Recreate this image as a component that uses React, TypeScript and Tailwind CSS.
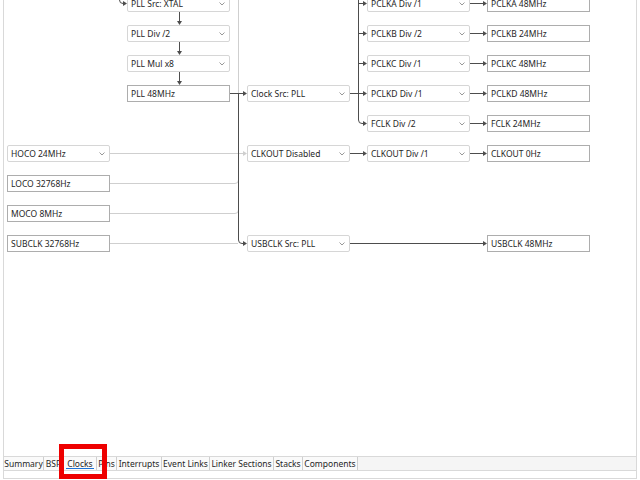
import React from 'react';

type Node = { col: number; row: number; label: string; dd?: boolean };

// column left edges and row tops, in page pixels
const COLS = [7, 127, 247, 367, 487];
const rowTop = (r: number) => -5 + 30 * r;

const NODES: Node[] = [
  { col: 1, row: 0, label: 'PLL Src: XTAL', dd: true },
  { col: 1, row: 1, label: 'PLL Div /2', dd: true },
  { col: 1, row: 2, label: 'PLL Mul x8', dd: true },
  { col: 1, row: 3, label: 'PLL 48MHz' },
  { col: 2, row: 3, label: 'Clock Src: PLL', dd: true },
  { col: 3, row: 0, label: 'PCLKA Div /1', dd: true },
  { col: 4, row: 0, label: 'PCLKA 48MHz' },
  { col: 3, row: 1, label: 'PCLKB Div /2', dd: true },
  { col: 4, row: 1, label: 'PCLKB 24MHz' },
  { col: 3, row: 2, label: 'PCLKC Div /1', dd: true },
  { col: 4, row: 2, label: 'PCLKC 48MHz' },
  { col: 3, row: 3, label: 'PCLKD Div /1', dd: true },
  { col: 4, row: 3, label: 'PCLKD 48MHz' },
  { col: 3, row: 4, label: 'FCLK Div /2', dd: true },
  { col: 4, row: 4, label: 'FCLK 24MHz' },
  { col: 0, row: 5, label: 'HOCO 24MHz', dd: true },
  { col: 2, row: 5, label: 'CLKOUT Disabled', dd: true },
  { col: 3, row: 5, label: 'CLKOUT Div /1', dd: true },
  { col: 4, row: 5, label: 'CLKOUT 0Hz' },
  { col: 0, row: 6, label: 'LOCO 32768Hz' },
  { col: 0, row: 7, label: 'MOCO 8MHz' },
  { col: 0, row: 8, label: 'SUBCLK 32768Hz' },
  { col: 2, row: 8, label: 'USBCLK Src: PLL', dd: true },
  { col: 4, row: 8, label: 'USBCLK 48MHz' },
];

const TABS = [
  { label: 'Summary', w: 40 },
  { label: 'BSP', w: 20 },
  { label: 'Clocks', w: 33, active: true },
  { label: 'Pins', w: 20 },
  { label: 'Interrupts', w: 45 },
  { label: 'Event Links', w: 48 },
  { label: 'Linker Sections', w: 64 },
  { label: 'Stacks', w: 29 },
  { label: 'Components', w: 55 },
];

const DARK = '#4d4d4d';
const LIGHT = '#cfcfcf';

const cy = (r: number) => 3.5 + 30 * r;

function Arrow({ x, y, color = DARK }: { x: number; y: number; color?: string }) {
  // right-pointing head, tip at x
  return <polygon points={`${x - 4},${y - 2.5} ${x},${y} ${x - 4},${y + 2.5}`} fill={color} />;
}

function ArrowDown({ x, y }: { x: number; y: number }) {
  return <polygon points={`${x - 2.5},${y - 4} ${x},${y} ${x + 2.5},${y - 4}`} fill={DARK} />;
}

function Wires() {
  return (
    <svg className="absolute left-0 top-0" width={640} height={456} viewBox="0 0 640 456">
      <g fill="none" stroke={LIGHT} strokeWidth={1}>
        <path d="M238.5,0 V93" />
        <path d="M110,153.5 H243" />
        <path d="M110,183.5 H235 Q238.5,183.5 238.5,180" />
        <path d="M110,213.5 H235 Q238.5,213.5 238.5,210" />
        <path d="M110,243.5 H238" />
      </g>
      <Arrow x={247} y={153.5} color={LIGHT} />

      <g fill="none" stroke={DARK} strokeWidth={1}>
        {/* XTAL into PLL source */}
        <path d="M119.5,-6 V0 Q119.5,3.5 123,3.5 H124" />
        {/* PLL chain */}
        <path d="M179.5,12 V22" />
        <path d="M179.5,42 V52" />
        <path d="M179.5,72 V82" />
        <path d="M230,93.5 H244" />
        {/* PLL to USB source */}
        <path d="M238.5,93.5 V240 Q238.5,243.5 242,243.5 H244" />
        {/* system clock bus */}
        <path d="M350,93.5 H358.5" />
        <path d="M358.5,-10 V120 Q358.5,123.5 362,123.5 H364" />
        {[0, 1, 2, 3].map((r) => (
          <path key={r} d={`M358.5,${cy(r)} H364`} />
        ))}
        {[0, 1, 2, 3, 4, 5].map((r) => (
          <path key={`o${r}`} d={`M470,${cy(r)} H484`} />
        ))}
        <path d="M350,153.5 H364" />
        <path d="M350,243.5 H484" />
      </g>

      <Arrow x={127} y={3.5} />
      <ArrowDown x={179.5} y={25} />
      <ArrowDown x={179.5} y={55} />
      <ArrowDown x={179.5} y={85} />
      <Arrow x={247} y={93.5} />
      <Arrow x={247} y={243.5} />
      {[0, 1, 2, 3, 4, 5].map((r) => (
        <Arrow key={`a${r}`} x={367} y={cy(r)} />
      ))}
      {[0, 1, 2, 3, 4, 5].map((r) => (
        <Arrow key={`b${r}`} x={487} y={cy(r)} />
      ))}
      <Arrow x={487} y={243.5} />
    </svg>
  );
}

function Box({ node }: { node: Node }) {
  return (
    <div
      className={`absolute flex h-[17px] w-[103px] items-center bg-white pl-[3px] text-[8.5px] leading-[12px] text-[#262626] ${
        node.dd ? 'rounded-[2px] border border-[#d6d6d6]' : 'border border-[#adadad]'
      }`}
      style={{ left: COLS[node.col], top: rowTop(node.row) }}
    >
      <span className="flex-1 whitespace-nowrap">{node.label}</span>
      {node.dd && (
        <svg width="6" height="4" viewBox="0 0 6 4" className="mr-[4px]">
          <path d="M0.5,0.5 L3,3 L5.5,0.5" fill="none" stroke="#8c8c8c" strokeWidth="0.9" />
        </svg>
      )}
    </div>
  );
}

export default function App() {
  return (
    <div className="relative h-[480px] w-[640px] overflow-hidden bg-white font-['Noto_Sans',sans-serif]">
      <div className="ml-[3px] flex w-[634px] flex-col">
        {/* diagram canvas */}
        <div className="relative h-[457px] overflow-hidden border-x border-b border-[#d9d9d9] bg-white">
          <div className="absolute left-[-4px] top-0 h-[456px] w-[640px]">
            <Wires />
            {NODES.map((n) => (
              <Box key={n.label} node={n} />
            ))}
          </div>
        </div>

        {/* editor tabs */}
        <div className="flex h-[14px] border-x border-b border-[#d9d9d9] bg-[#f5f5f5] text-[8.5px] leading-[12px] text-[#262626]">
          {TABS.map((t) => (
            <div
              key={t.label}
              className="relative flex h-full items-center justify-center whitespace-nowrap border-r border-[#cfcfcf] bg-[#fafafa]"
              style={{ width: t.w }}
            >
              {t.label}
              {t.active && <div className="absolute bottom-[1px] left-[2px] right-[2px] h-[1.5px] bg-[#1a73d9]" />}
            </div>
          ))}
        </div>
        <div className="h-[8px] border-x border-b border-[#d9d9d9] bg-white" />
      </div>

      {/* annotation */}
      <div className="absolute left-[59px] top-[444px] h-[35px] w-[48px] border-[5px] border-[#ee0000]" />
    </div>
  );
}
